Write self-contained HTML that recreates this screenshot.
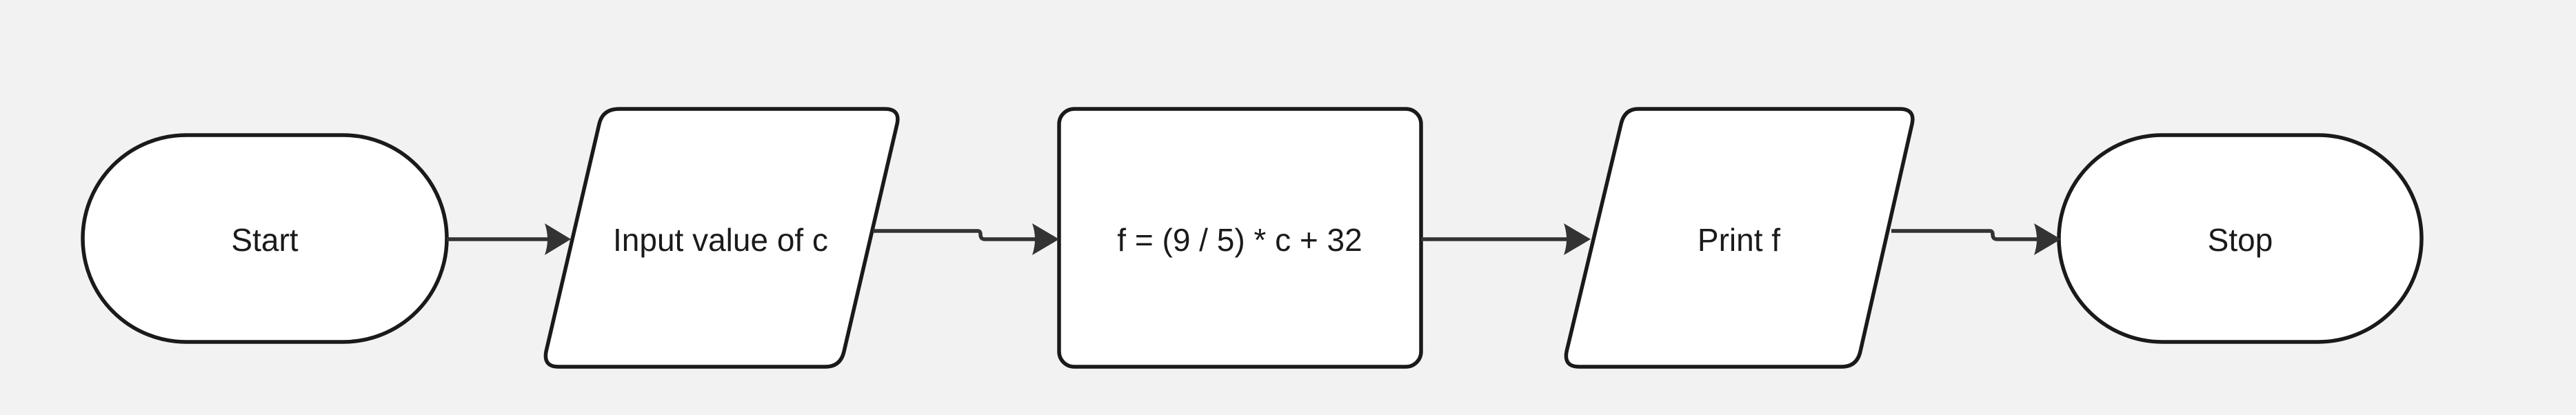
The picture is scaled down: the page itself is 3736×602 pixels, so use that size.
<!DOCTYPE html>
<html><head><style>html,body{margin:0;padding:0;background:#f2f2f2;}svg{display:block}</style></head>
<body>
<svg width="3736" height="602" viewBox="0 0 3736 602" xmlns="http://www.w3.org/2000/svg">
<rect width="3736" height="602" fill="#f2f2f2"/>
<g fill="#fff" stroke="#1a1a1a" stroke-width="5.5" stroke-linejoin="round">
<path d="M270 196 H498 A150 150 0 0 1 498 496 H270 A150 150 0 0 1 270 196 Z"/>
<path d="M898 158 H1283 Q1306 158 1301 180 L1224 510 Q1219 532 1197 532 H810 Q788 532 792 510 L869 180 Q874 158 898 158 Z"/>
<rect x="1536" y="158" width="525" height="374" rx="22"/>
<path d="M2376 158 H2755 Q2778 158 2773 180 L2698 510 Q2693 532 2671 532 H2290 Q2268 532 2272 510 L2351 180 Q2356 158 2376 158 Z"/>
<path d="M3136 196 H3362 A150 150 0 0 1 3362 496 H3136 A150 150 0 0 1 3136 196 Z"/>
</g>
<g fill="none" stroke="#333" stroke-width="5.5">
<path d="M648 347 H810"/>
<path d="M1266 335 H1418 Q1422 335 1422 340 Q1422 347 1428 347 H1520"/>
<path d="M2061 347 H2290"/>
<path d="M2743 335 H2886 Q2890 335 2890 340 Q2890 347 2896 347 H2972"/>
</g>
<g fill="#333">
<path d="M790 324 L828 347 L790 370 Q798 347 790 324 Z"/>
<path d="M1497 324 L1536 347 L1497 370 Q1505 347 1497 324 Z"/>
<path d="M2268 324 L2307 347 L2268 370 Q2276 347 2268 324 Z"/>
<path d="M2950 324 L2989 347 L2950 370 Q2958 347 2950 324 Z"/>
</g>
<g font-family="'Liberation Sans', sans-serif" font-size="46" fill="#1a1a1a" text-anchor="middle">
<text x="384" y="364">Start</text>
<text x="1045" y="364">Input value of c</text>
<text x="1798" y="364">f = (9 / 5) * c + 32</text>
<text x="2522" y="364">Print f</text>
<text x="3249" y="364">Stop</text>
</g>
</svg>
</body></html>
